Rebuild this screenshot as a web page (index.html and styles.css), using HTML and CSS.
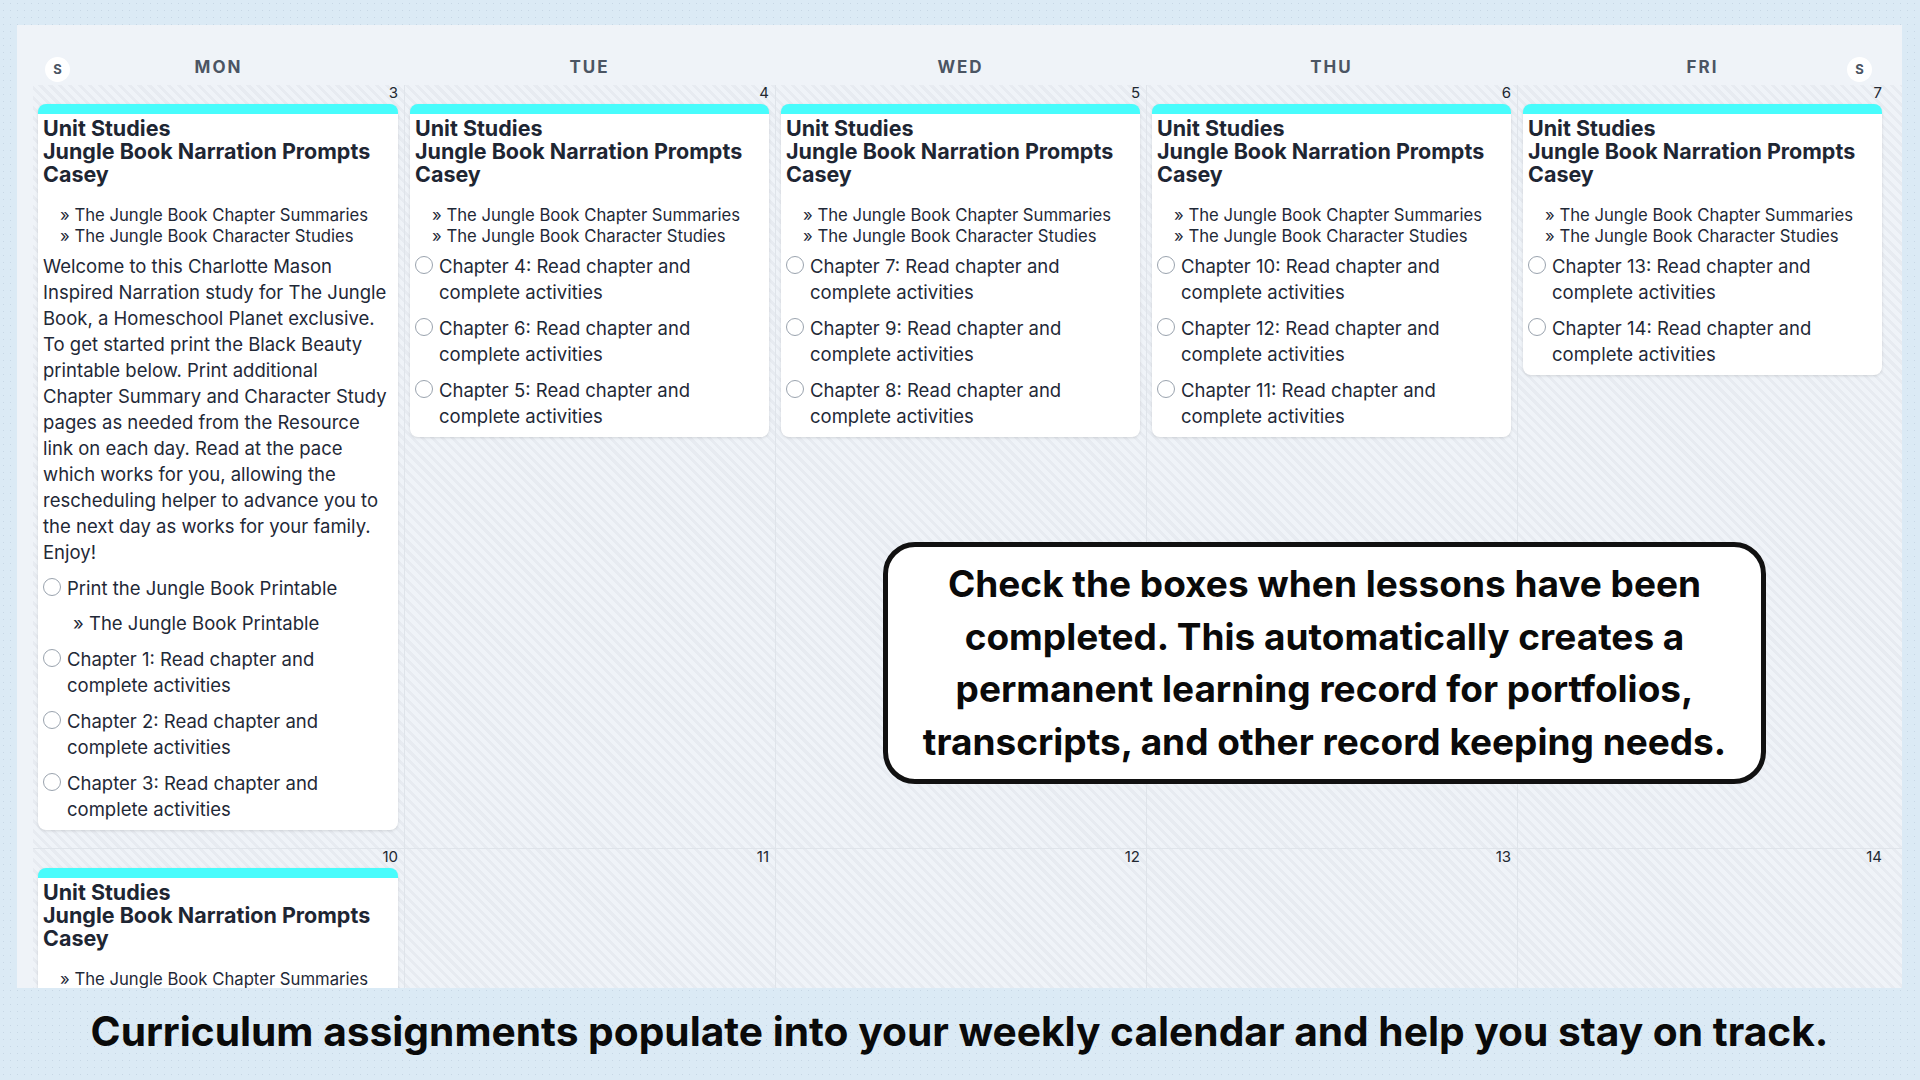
FILE: index.html
```html
<!DOCTYPE html>
<html>
<head>
  <title>Weekly Planner</title>
  <meta name="viewport" content="width=device-width, initial-scale=1.0">
  <link rel="stylesheet" href="styles.css">
</head>
<body>
  <div class="page">
    <div class="panel">
      <span class="weekend-badge left">S</span>
      <span class="weekend-badge right">S</span>

      <!-- Day names -->
      <div class="weekdays">
        <div>MON</div>
        <div>TUE</div>
        <div>WED</div>
        <div>THU</div>
        <div>FRI</div>
      </div>

      <!-- Week 1 -->
      <div class="week">
        <div class="day">
          <div class="date">3</div>
          <div class="card">
            <div class="card-title">Unit Studies<br>Jungle Book Narration Prompts<br>Casey</div>
            <div class="links">
              <div>» The Jungle Book Chapter Summaries</div>
              <div>» The Jungle Book Character Studies</div>
            </div>
            <p class="note">Welcome to this Charlotte Mason Inspired Narration study for The Jungle Book, a Homeschool Planet exclusive. To get started print the Black Beauty printable below. Print additional Chapter Summary and Character Study pages as needed from the Resource link on each day. Read at the pace which works for you, allowing the rescheduling helper to advance you to the next day as works for your family. Enjoy!</p>
            <div class="task"><span class="check"></span><span>Print the Jungle Book Printable</span></div>
            <div class="sublink">» The Jungle Book Printable</div>
            <div class="task"><span class="check"></span><span>Chapter 1: Read chapter and complete activities</span></div>
            <div class="task"><span class="check"></span><span>Chapter 2: Read chapter and complete activities</span></div>
            <div class="task"><span class="check"></span><span>Chapter 3: Read chapter and complete activities</span></div>
          </div>
        </div>
        <div class="day">
          <div class="date">4</div>
          <div class="card">
            <div class="card-title">Unit Studies<br>Jungle Book Narration Prompts<br>Casey</div>
            <div class="links">
              <div>» The Jungle Book Chapter Summaries</div>
              <div>» The Jungle Book Character Studies</div>
            </div>
            <div class="task"><span class="check"></span><span>Chapter 4: Read chapter and complete activities</span></div>
            <div class="task"><span class="check"></span><span>Chapter 6: Read chapter and complete activities</span></div>
            <div class="task"><span class="check"></span><span>Chapter 5: Read chapter and complete activities</span></div>
          </div>
        </div>
        <div class="day">
          <div class="date">5</div>
          <div class="card">
            <div class="card-title">Unit Studies<br>Jungle Book Narration Prompts<br>Casey</div>
            <div class="links">
              <div>» The Jungle Book Chapter Summaries</div>
              <div>» The Jungle Book Character Studies</div>
            </div>
            <div class="task"><span class="check"></span><span>Chapter 7: Read chapter and complete activities</span></div>
            <div class="task"><span class="check"></span><span>Chapter 9: Read chapter and complete activities</span></div>
            <div class="task"><span class="check"></span><span>Chapter 8: Read chapter and complete activities</span></div>
          </div>
        </div>
        <div class="day">
          <div class="date">6</div>
          <div class="card">
            <div class="card-title">Unit Studies<br>Jungle Book Narration Prompts<br>Casey</div>
            <div class="links">
              <div>» The Jungle Book Chapter Summaries</div>
              <div>» The Jungle Book Character Studies</div>
            </div>
            <div class="task"><span class="check"></span><span>Chapter 10: Read chapter and complete activities</span></div>
            <div class="task"><span class="check"></span><span>Chapter 12: Read chapter and complete activities</span></div>
            <div class="task"><span class="check"></span><span>Chapter 11: Read chapter and complete activities</span></div>
          </div>
        </div>
        <div class="day">
          <div class="date">7</div>
          <div class="card">
            <div class="card-title">Unit Studies<br>Jungle Book Narration Prompts<br>Casey</div>
            <div class="links">
              <div>» The Jungle Book Chapter Summaries</div>
              <div>» The Jungle Book Character Studies</div>
            </div>
            <div class="task"><span class="check"></span><span>Chapter 13: Read chapter and complete activities</span></div>
            <div class="task"><span class="check"></span><span>Chapter 14: Read chapter and complete activities</span></div>
          </div>
        </div>
      </div>

      <!-- Week 2 -->
      <div class="week">
        <div class="day">
          <div class="date">10</div>
          <div class="card">
            <div class="card-title">Unit Studies<br>Jungle Book Narration Prompts<br>Casey</div>
            <div class="links">
              <div>» The Jungle Book Chapter Summaries</div>
            </div>
          </div>
        </div>
        <div class="day"><div class="date">11</div></div>
        <div class="day"><div class="date">12</div></div>
        <div class="day"><div class="date">13</div></div>
        <div class="day"><div class="date">14</div></div>
      </div>

      <!-- Tip bubble -->
      <div class="callout">
        Check the boxes when lessons have been<br>
        completed. This automatically creates a<br>
        permanent learning record for portfolios,<br>
        transcripts, and other record keeping needs.
      </div>
    </div>

    <div class="caption">Curriculum assignments populate into your weekly calendar and help you stay on track.</div>
  </div>
</body>
</html>
```

FILE: styles.css
```css
body {
  margin: 0;
  font-family: "Inter", "Noto Sans", sans-serif;
  color: #1f2937;
  background-color: #dbeaf5;
  background-image: radial-gradient(rgba(160, 180, 200, 0.35) 0.6px, transparent 0.8px);
  background-size: 7px 7px;
}
.page {
  width: 1920px;
  height: 1080px;
  padding: 25px 18px 0 17px;
  box-sizing: border-box;
}
.panel {
  position: relative;
  height: 963px;
  overflow: hidden;
  background: #eff3f8;
}
.weekend-badge {
  position: absolute;
  top: 32px;
  width: 25px;
  height: 25px;
  border-radius: 50%;
  background: #fff;
  color: #4b5563;
  font-size: 13px;
  font-weight: 700;
  line-height: 25px;
  text-align: center;
}
.weekend-badge.left {
  left: 28px;
}
.weekend-badge.right {
  right: 30px;
}
.weekdays {
  display: grid;
  grid-template-columns: repeat(5, 371px);
  margin-left: 16px;
  height: 60px;
  padding-top: 32px;
  box-sizing: border-box;
}
.weekdays div {
  text-align: center;
  font-size: 17px;
  font-weight: 700;
  line-height: 20px;
  letter-spacing: 2px;
  color: #4b5563;
}
.week {
  display: grid;
  grid-template-columns: repeat(5, 371px);
  margin-left: 16px;
  border-bottom: 1px solid #dfe4ea;
  background: repeating-linear-gradient(45deg, #eff3f8 0, #eff3f8 4px, #e7ebf1 4px, #e7ebf1 7px);
}
.day {
  padding: 0 6px 18px 5px;
  border-left: 1px solid #dfe4ea;
}
.day:first-child {
  border-left: none;
}
.date {
  height: 19px;
  line-height: 16px;
  font-size: 15px;
  text-align: right;
  color: #222831;
}
.card {
  background: #fff;
  border-top: 10px solid #48fcfc;
  border-radius: 8px;
  padding: 3px 5px 8px;
  box-shadow: 0 1px 3px rgba(0, 0, 0, 0.12);
}
.card-title {
  font-size: 21.5px;
  font-weight: 700;
  line-height: 23px;
  color: #1e2633;
}
.links {
  margin-top: 19px;
  padding-left: 17px;
  font-size: 16.7px;
  line-height: 21px;
}
.note {
  margin: 6px 4px 0 0;
  font-size: 18.5px;
  line-height: 26px;
}
.task {
  display: flex;
  gap: 6px;
  margin-top: 10px;
  font-size: 18.5px;
  line-height: 26px;
}
.links + .task {
  margin-top: 6px;
}
.check {
  flex: none;
  width: 16px;
  height: 16px;
  margin-top: 3px;
  border: 1.5px solid #9aa3ae;
  border-radius: 50%;
}
.sublink {
  margin-top: 9px;
  padding-left: 30px;
  font-size: 18.5px;
  line-height: 26px;
}
.callout {
  position: absolute;
  left: 866px;
  top: 517px;
  width: 883px;
  height: 242px;
  box-sizing: border-box;
  border: 5px solid #111;
  border-radius: 32px;
  background: #fff;
  display: flex;
  align-items: center;
  justify-content: center;
  text-align: center;
  font-size: 37px;
  font-weight: 700;
  line-height: 52.5px;
  color: #0a0a0a;
}
.caption {
  height: 92px;
  display: flex;
  align-items: center;
  justify-content: center;
  padding-bottom: 6px;
  box-sizing: border-box;
  font-size: 40.7px;
  font-weight: 700;
  color: #0a0a0a;
}
```
